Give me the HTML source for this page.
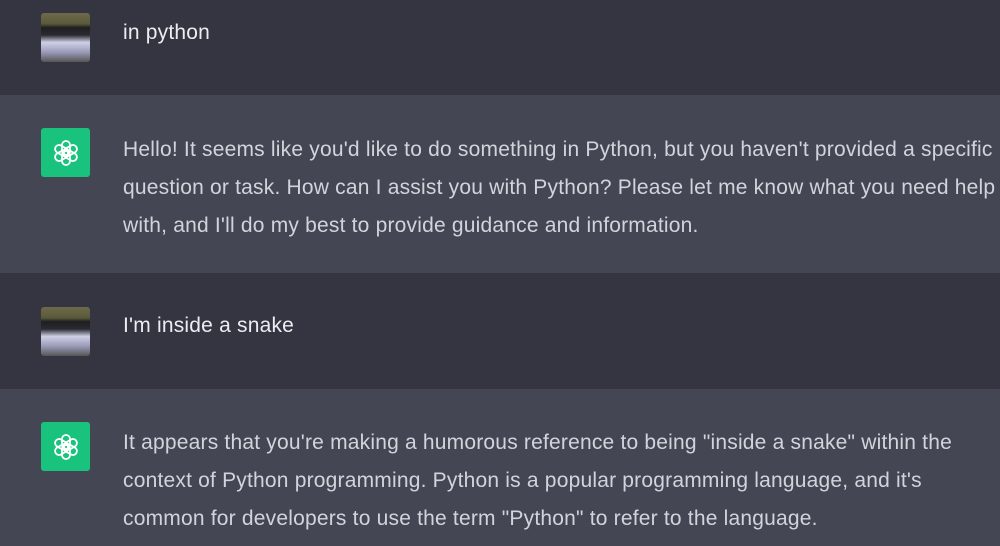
<!DOCTYPE html>
<html><head><meta charset="utf-8"><style>
body{margin:0;width:1000px;height:546px;overflow:hidden;font-family:"Liberation Sans",sans-serif;font-size:21px;letter-spacing:0.2px}
.row{position:absolute;left:0;width:1000px;}
.u{background:#343541;color:#ececf1}
.b{background:#444654;color:#d1d5db}
.av{position:absolute;left:41px;width:49px;height:49px;border-radius:3px}
.ua{background:linear-gradient(180deg,#6d6a4a 0%,#5a5a3a 22%,#1e1e22 30%,#2a2a30 45%,#cfd0e6 60%,#9a9ab8 80%,#555 100%)}
.ga{background:#19c37d;display:flex;align-items:center;justify-content:center}
.t{position:absolute;left:123px;right:0;line-height:38px;white-space:nowrap}
</style></head><body>
<div class="row u" style="top:0;height:95px">
<div class="av ua" style="top:13px"></div>
<div class="t" style="top:14px">in python</div></div>
<div class="row b" style="top:95px;height:178px">
<div class="av ga" style="top:33px"><svg width="30" height="30" viewBox="-15 -15 30 30" fill="none" stroke="#fff" stroke-width="1.8"><rect x="-4" y="-12" width="8" height="14" rx="4"/><rect x="-4" y="-12" width="8" height="14" rx="4" transform="rotate(60)"/><rect x="-4" y="-12" width="8" height="14" rx="4" transform="rotate(120)"/><rect x="-4" y="-12" width="8" height="14" rx="4" transform="rotate(180)"/><rect x="-4" y="-12" width="8" height="14" rx="4" transform="rotate(240)"/><rect x="-4" y="-12" width="8" height="14" rx="4" transform="rotate(300)"/></svg></div>
<div class="t" style="top:36px">Hello! It seems like you'd like to do something in Python, but you haven't provided a specific<br>question or task. How can I assist you with Python? Please let me know what you need help<br>with, and I'll do my best to provide guidance and information.</div></div>
<div class="row u" style="top:273px;height:116px">
<div class="av ua" style="top:34px"></div>
<div class="t" style="top:34px">I'm inside a snake</div></div>
<div class="row b" style="top:389px;height:157px">
<div class="av ga" style="top:33px"><svg width="30" height="30" viewBox="-15 -15 30 30" fill="none" stroke="#fff" stroke-width="1.8"><rect x="-4" y="-12" width="8" height="14" rx="4"/><rect x="-4" y="-12" width="8" height="14" rx="4" transform="rotate(60)"/><rect x="-4" y="-12" width="8" height="14" rx="4" transform="rotate(120)"/><rect x="-4" y="-12" width="8" height="14" rx="4" transform="rotate(180)"/><rect x="-4" y="-12" width="8" height="14" rx="4" transform="rotate(240)"/><rect x="-4" y="-12" width="8" height="14" rx="4" transform="rotate(300)"/></svg></div>
<div class="t" style="top:35px">It appears that you're making a humorous reference to being "inside a snake" within the<br>context of Python programming. Python is a popular programming language, and it's<br>common for developers to use the term "Python" to refer to the language.</div></div>
</body></html>
